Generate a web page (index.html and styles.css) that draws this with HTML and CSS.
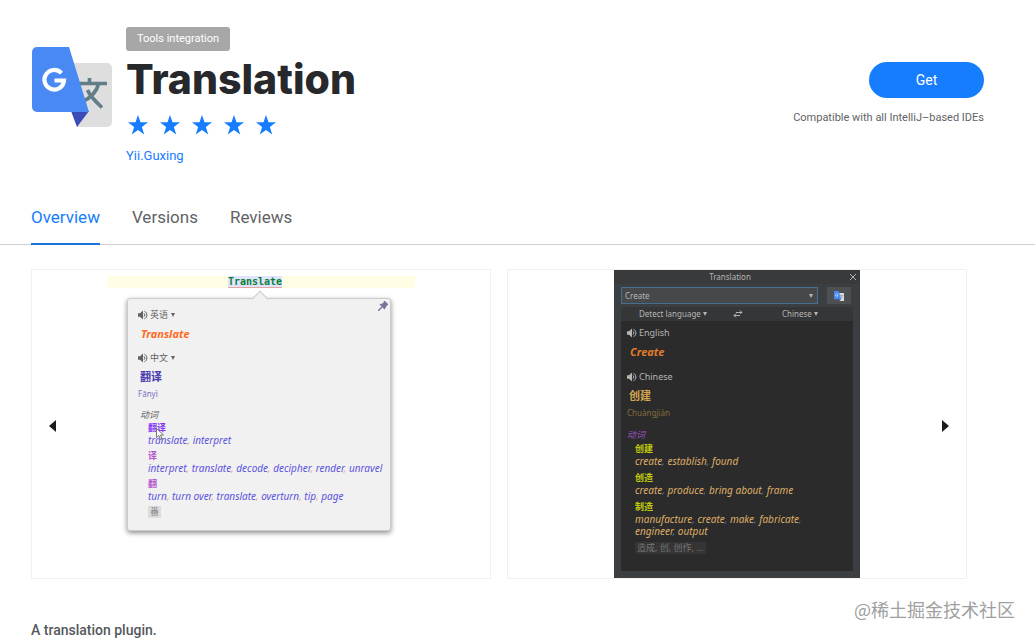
FILE: index.html
```html
<!DOCTYPE HTML>
<html lang="en">
<head>
  <meta charset="utf-8">
  <title>Translation</title>
  <link rel="stylesheet" href="styles.css">
</head>
<body>
<svg class="defs" width="0" height="0" aria-hidden="true">
  <symbol id="star" viewBox="0 0 20 20"><path d="M10 0l2.5 7.3H20l-6.1 4.6 2.3 7.6L10 15l-6.2 4.5 2.3-7.6L0 7.3h7.5z"/></symbol>
  <symbol id="sound" viewBox="0 0 10 10"><path d="M0 3.2h2L5 .6v8.8L2 6.8H0z"/><path d="M6 3.3c1 .8 1 2.6 0 3.4M6.4 1.2c3.3 1.4 3.3 6.2 0 7.6" fill="none" stroke="currentColor" stroke-width="1"/></symbol>
  <symbol id="logo" viewBox="0 0 80 80">
    <path d="M36 16h39a5 5 0 0 1 5 5v54a5 5 0 0 1-5 5H45z" fill="#dedede"/>
    <path d="M46 36.5h29M57.500 31v5M66.500 37C65 44 59 50.500 50 55M55.500 43C58 49 64 55 70 60.500" fill="none" stroke="#607d88" stroke-width="3.600"/>
    <path d="M39 64h18L45 80z" fill="#3b4cb8"/>
    <path d="M5 0h32l20 65H5a5 5 0 0 1-5-5V5a5 5 0 0 1 5-5z" fill="#4889f4"/>
    <path d="M29.500 26.200A9.800 9.800 0 1 0 32 33.500H22.500" fill="none" stroke="#fff" stroke-width="4.200"/>
  </symbol>
</svg>
<header>
  <svg class="logo"><use href="#logo"/></svg>
  <div class="info">
    <span class="tag">Tools integration</span>
    <h1>Translation</h1>
    <div class="stars">
      <svg><use href="#star"/></svg>
      <svg><use href="#star"/></svg>
      <svg><use href="#star"/></svg>
      <svg><use href="#star"/></svg>
      <svg><use href="#star"/></svg>
    </div>
    <a class="author" href="#">Yii.Guxing</a>
  </div>
  <div class="install">
    <button class="get">Get</button>
    <p>Compatible with all IntelliJ–based IDEs</p>
  </div>
</header>
<nav>
  <a class="active" href="#">Overview</a>
  <a href="#">Versions</a>
  <a href="#">Reviews</a>
</nav>
<main>
  <section class="slides">
    <button class="prev" aria-label="Previous"></button>
    <div class="slide">
      <div class="light">
        <div class="editor"><span>Translate</span></div>
        <div class="balloon">
          <svg class="pin" viewBox="0 0 10 10"><path d="M0 10L4 6M2 3l5 5M3.500 4L7 1M6 7l3-3.500M6 0l4 4M4 4l3 2.500L8.500 3 7 1.500z" fill="#77749f" stroke="#77749f" stroke-width="1.300"/></svg>
          <div class="lang"><svg class="sound"><use href="#sound"/></svg><select aria-label="Source"><option>英语</option></select><i class="arrow"></i></div>
          <p class="word">Translate</p>
          <div class="lang"><svg class="sound"><use href="#sound"/></svg><select aria-label="Target"><option>中文</option></select><i class="arrow"></i></div>
          <p class="result">翻译</p>
          <p class="phonetic">Fānyì</p>
          <p class="kind">动词</p>
          <dl>
            <dt class="first">翻译<svg class="cursor" viewBox="0 0 8 12"><path d="M.5.5v9L3 7.500l1.500 4 1.500-.600L4.500 7h3z" fill="#fff" stroke="#777"/></svg></dt>
            <dd>translate<s>,</s> interpret</dd>
            <dt>译</dt>
            <dd>interpret<s>,</s> translate<s>,</s> decode<s>,</s> decipher<s>,</s> render<s>,</s> unravel</dd>
            <dt>翻</dt>
            <dd>turn<s>,</s> turn over<s>,</s> translate<s>,</s> overturn<s>,</s> tip<s>,</s> page</dd>
          </dl>
          <span class="more">番</span>
        </div>
      </div>
    </div>
    <div class="slide">
      <div class="dark">
        <div class="titlebar">Translation<svg class="close" viewBox="0 0 8 8"><path d="M1 1l6 6M7 1L1 7" stroke="#b5b5b5"/></svg></div>
        <div class="query">
          <div class="combo"><input type="text" value="Create" aria-label="Text to translate"><i class="arrow"></i></div>
          <button aria-label="Translate"><svg><use href="#logo"/></svg></button>
        </div>
        <div class="languages">
          <div><select aria-label="From"><option>Detect language</option></select><i class="arrow"></i></div>
          <svg class="swap" viewBox="0 0 10 8"><path d="M3 2.500h6M7 .5l2 2-2 1M7 5.500H1M3 3.500l-2 2 2 2" fill="none" stroke="#b5b5b5"/></svg>
          <div><select aria-label="To"><option>Chinese</option></select><i class="arrow"></i></div>
        </div>
        <div class="output">
          <p class="lang"><svg class="sound"><use href="#sound"/></svg>English</p>
          <p class="word">Create</p>
          <p class="lang"><svg class="sound"><use href="#sound"/></svg>Chinese</p>
          <p class="result">创建</p>
          <p class="phonetic">Chuàngjiàn</p>
          <p class="kind">动词</p>
          <dl>
            <dt>创建</dt>
            <dd>create<s>,</s> establish<s>,</s> found</dd>
            <dt>创造</dt>
            <dd>create<s>,</s> produce<s>,</s> bring about<s>,</s> frame</dd>
            <dt>制造</dt>
            <dd>manufacture<s>,</s> create<s>,</s> make<s>,</s> fabricate<s>,</s> engineer<s>,</s> output</dd>
          </dl>
          <span class="more">造成, 创, 创作, ...</span>
        </div>
      </div>
    </div>
    <button class="next" aria-label="Next"></button>
  </section>
  <p class="summary">A translation plugin.</p>
</main>
<div class="watermark">@稀土掘金技术社区</div>
</body>
</html>
```
FILE: styles.css
```css
/*Style initialization*/
*{box-sizing:border-box;}
body{
	position:relative;
	min-height:100vh;
	margin:0;
	background:#fff;
	color:#5f6266;
	font:14px/18px Roboto,"Noto Sans CJK SC",sans-serif;
}
a{color:#167dff;text-decoration:none;}
h1,p,dl,dd{margin:0;}
button,input,select{
	margin:0;
	padding:0;
	border:0;
	background:none;
	color:inherit;
	font:inherit;
}
select{appearance:none;}
s{text-decoration:none;}
svg{display:block;fill:currentColor;}
.defs{position:absolute;}

/*1.header*/
header{
	display:flex;
	padding:27px 51px 0 32px;
}
.logo{
	width:80px;
	height:80px;
	margin:20px 14px 0 0;
}
.info{flex:1;}
.tag{
	display:block;
	width:fit-content;
	padding:0 11px;
	border-radius:3px;
	background:#a7a7a7;
	color:#fff;
	font-size:11px;
	line-height:24px;
}
h1{
	color:#27282c;
	font:800 41px/56px Inter,sans-serif;
}
.stars{
	display:flex;
	gap:12px;
	padding:8px 2px;
	color:#167dff;
}
.stars svg{
	width:20px;
	height:20px;
}
.author{
	display:block;
	font-size:13px;
	line-height:26px;
}
.install{
	padding-top:35px;
	text-align:right;
}
.get{
	width:115px;
	height:36px;
	border-radius:18px;
	background:#167dff;
	color:#fff;
}
.install p{
	padding-top:11px;
	font-size:11px;
}

/*2.tabs*/
nav{
	display:flex;
	gap:32px;
	margin-top:20px;
	padding-left:31px;
	border-bottom:1px solid #cfcfcf;
	font-size:17px;
}
nav a{
	height:56px;
	margin-bottom:-1px;
	line-height:56px;
	color:#5f6266;
}
nav .active{
	border-bottom:2px solid #1a74dd;
	color:#167dff;
}

/*3.slides*/
.slides{
	position:relative;
	display:flex;
	gap:16px;
	margin:24px 68px 0 31px;
}
.slide{
	flex:1;
	display:flex;
	justify-content:center;
	height:310px;
	border:1px solid #f0f0f0;
}
.prev,.next{
	position:absolute;
	top:50%;
	margin-top:-4px;
	border:6px solid transparent;
}
.prev{
	left:18px;
	border-left:0;
	border-right:7px solid #1c1c1c;
}
.next{
	right:18px;
	border-right:0;
	border-left:7px solid #1c1c1c;
}
.light,.dark{
	font:10px/12px "Noto Sans","Noto Sans CJK SC",sans-serif;
}
.arrow{
	margin-left:2px;
	border:2px solid transparent;
	border-top:4px solid currentColor;
	border-bottom:0;
}
.sound{
	width:10px;
	height:10px;
}
.lang{
	display:flex;
	align-items:center;
	gap:2px;
}
.word{font-weight:bold;font-style:italic;}
.kind,dd{font-style:italic;}
dl{padding-left:8px;}
dt{
	font-size:9px;
	font-weight:bold;
}
.more{
	display:inline-block;
	margin-left:8px;
	padding:0 2px;
	font-size:9px;
}

/*3-1.light balloon*/
.light{
	width:308px;
	padding-top:6px;
}
.editor{
	padding-right:12px;
	background:#fffde4;
	font:bold 10px/12px "DejaVu Sans Mono",monospace;
	text-align:center;
	color:#0b7f3a;
}
.editor span{
	background:#dfe3fb;
	border-bottom:1px solid #e5a5a0;
}
.balloon{
	position:relative;
	width:264px;
	height:233px;
	margin:10px 0 0 20px;
	padding:8px 10px;
	border:1px solid #ccc;
	border-radius:3px;
	background:#f1f1f1;
	box-shadow:0 2px 5px rgba(0,0,0,.45);
	color:#626262;
}
.balloon::before{
	content:"";
	position:absolute;
	top:-6px;
	left:126px;
	width:11px;
	height:11px;
	border:1px solid #ccc;
	border-right:0;
	border-bottom:0;
	background:#f1f1f1;
	transform:rotate(45deg);
}
.pin{
	position:absolute;
	top:2px;
	right:2px;
	width:10px;
	height:10px;
}
.balloon .lang{
	height:16px;
	font-size:9px;
}
.balloon .arrow{margin-left:0;}
.balloon .word{
	padding-left:3px;
	color:#ff6a1f;
	font-size:11px;
	line-height:22px;
	margin-bottom:5px;
}
.balloon .result{
	padding-left:2px;
	color:#4a3bb0;
	font-size:11px;
	font-weight:bold;
	line-height:22px;
}
.balloon .phonetic{
	color:#7a70c4;
	font-size:8px;
}
.balloon .kind{
	margin-top:9px;
	padding-left:2px;
	font-size:9px;
}
.balloon dl{padding-left:10px;}
.balloon dt{
	position:relative;
	width:fit-content;
	margin-top:4px;
	color:#b455cc;
}
.balloon .first{
	margin-top:1px;
	color:#8437f5;
}
.cursor{
	position:absolute;
	top:6px;
	left:8px;
	width:8px;
	height:12px;
}
.balloon dd{
	color:#5c53e0;
	white-space:nowrap;
}
.balloon s{color:#f0a080;}
.balloon .more{
	margin:4px 0 0 10px;
	background:#dcdcdc;
	color:#8a8a8a;
}

/*3-2.dark window*/
.dark{
	width:246px;
	padding:0 7px 7px;
	background:#3c3f41;
	color:#b5b5b5;
	font-size:9px;
}
.titlebar{
	position:relative;
	margin:0 -7px;
	padding-right:14px;
	background:#393a3b;
	font-size:8px;
	line-height:14px;
	text-align:center;
}
.close{
	position:absolute;
	top:3px;
	right:3px;
	width:8px;
	height:8px;
}
.query{
	display:flex;
	gap:9px;
	padding:3px 2px 3px 0;
}
.combo{
	flex:1;
	display:flex;
	align-items:center;
	height:17px;
	padding:0 4px 0 3px;
	border:1px solid #466d94;
	background:#45494a;
}
.combo input{
	flex:1;
	min-width:0;
	font-size:8px;
}
.query button{
	display:flex;
	align-items:center;
	justify-content:center;
	width:24px;
	height:17px;
	background:#4c5052;
}
.query svg{
	width:10px;
	height:10px;
}
.languages{
	display:flex;
	align-items:center;
	justify-content:space-between;
	height:14px;
	padding:0 35px 0 18px;
	background:#343638;
	font-size:8px;
}
.languages div{
	display:flex;
	align-items:center;
}
.swap{
	width:10px;
	height:8px;
	margin-right:14px;
}
.output{
	height:250px;
	padding:4px 6px;
	background:#2b2b2b;
}
.output .lang{height:16px;}
.output .word{
	padding-left:3px;
	color:#e07a2c;
	font-size:11px;
	line-height:22px;
	margin-bottom:6px;
}
.output .result{
	padding-left:2px;
	color:#d5a650;
	font-size:11px;
	font-weight:bold;
	line-height:22px;
}
.output .phonetic{
	color:#856b3c;
	font-size:8px;
}
.output .kind{
	margin-top:10px;
	color:#9c50c0;
}
.output dt{
	margin-top:5px;
	color:#c2cb0c;
}
.output dt:first-child{margin-top:2px;}
.output dd{
	width:180px;
	color:#dfae68;
	font-size:10px;
}
.output s{color:#4a78a8;}
.output .more{
	margin-top:5px;
	background:#353535;
	color:#777;
}

/*4.summary*/
.summary{
	padding:42px 31px 0;
	color:#55585c;
	font-weight:500;
}
.watermark{
	position:absolute;
	right:20px;
	bottom:18px;
	color:#a0a0a0;
	font:18px/26px "Noto Sans CJK SC",sans-serif;
}
```
